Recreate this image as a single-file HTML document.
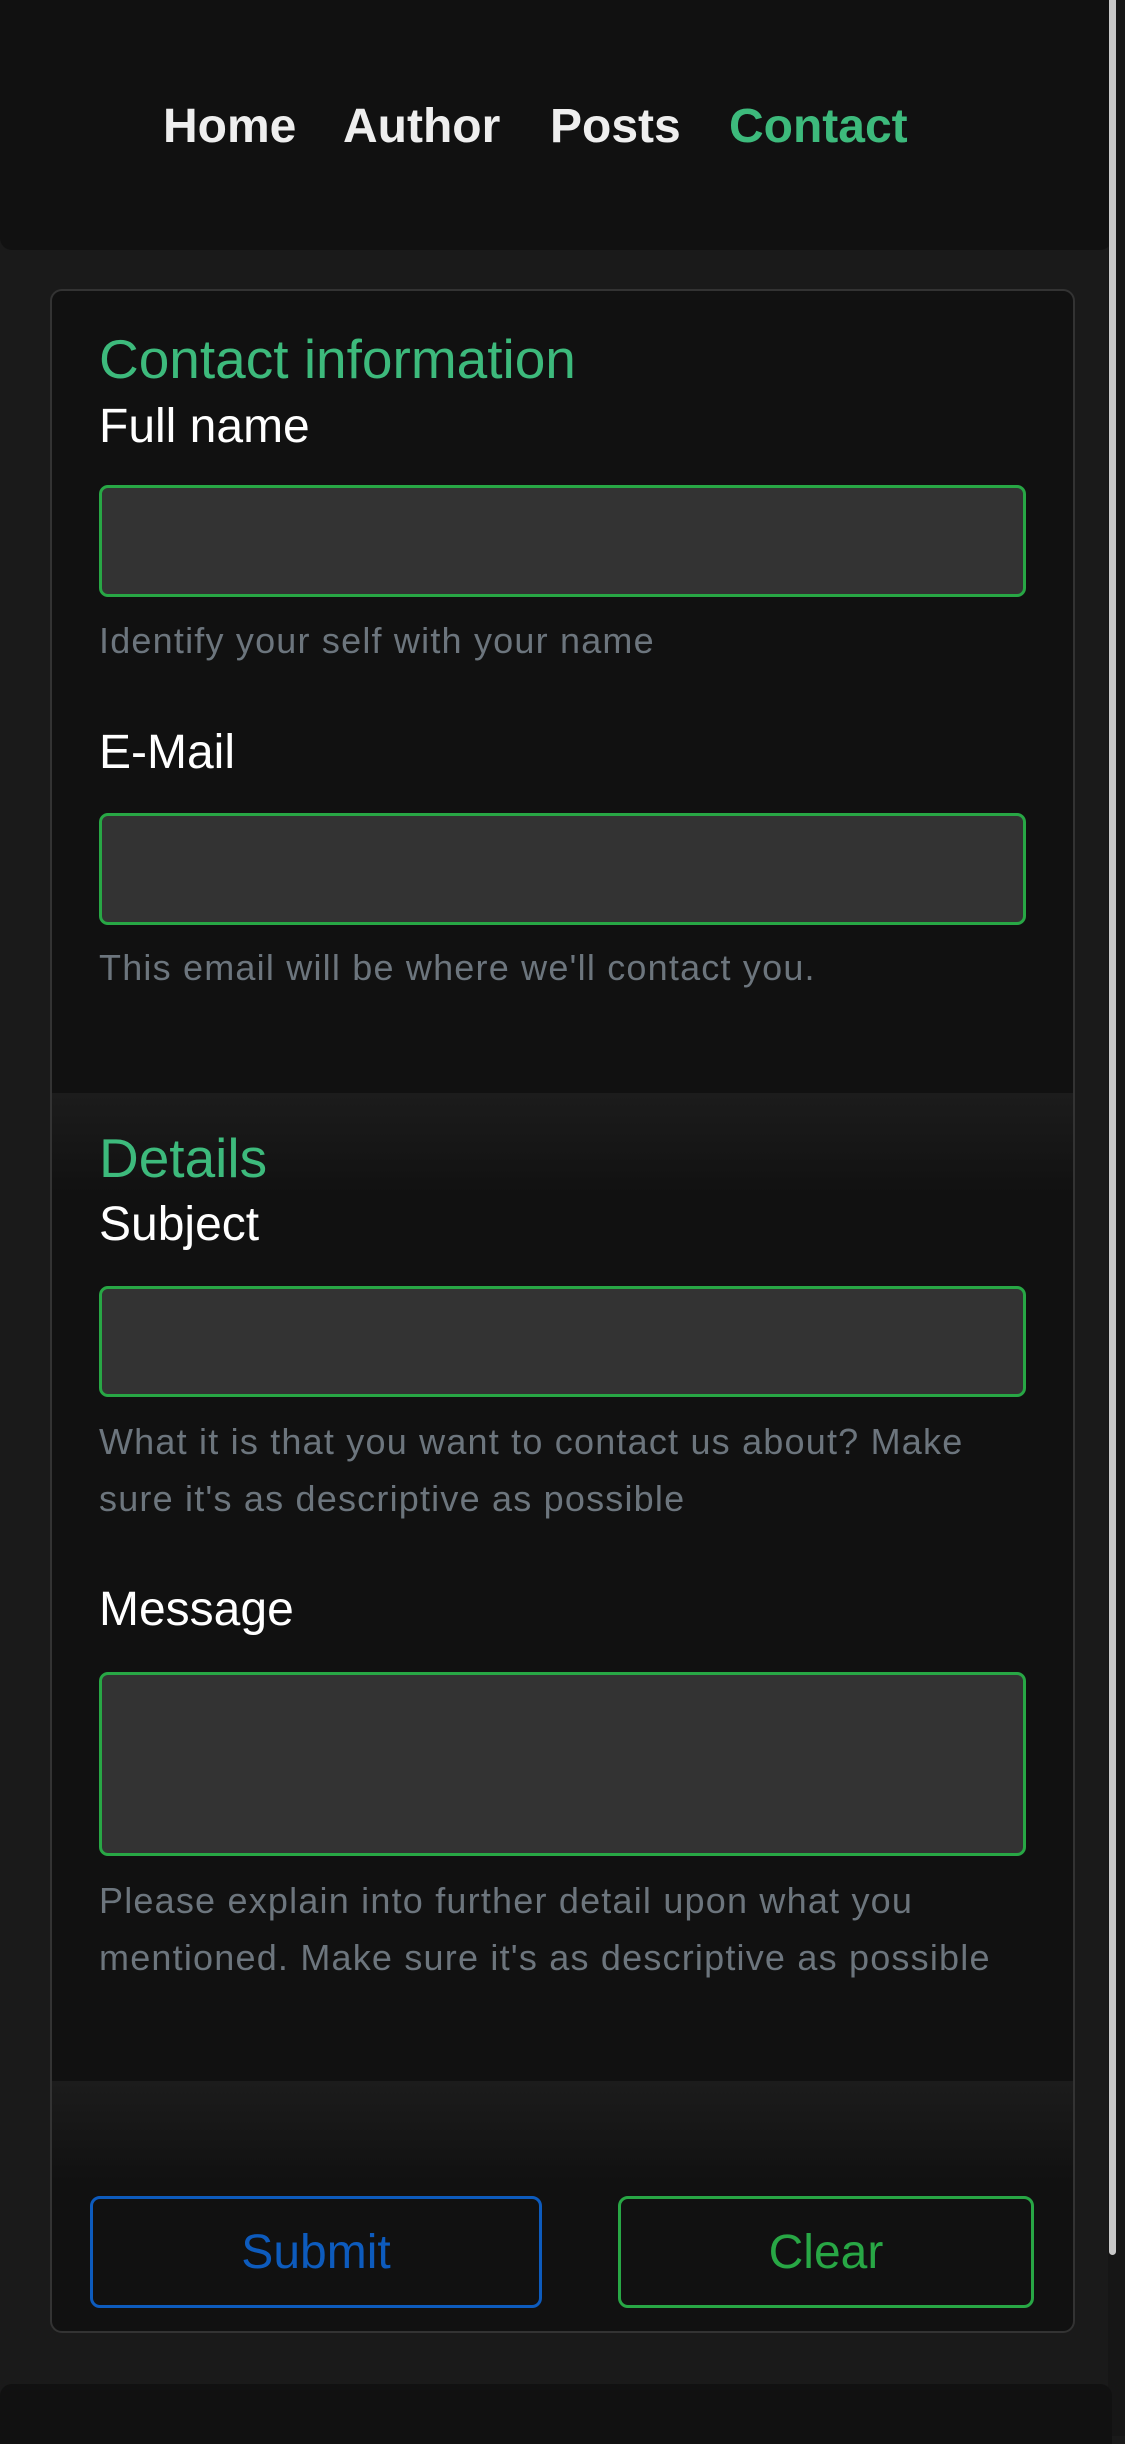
<!DOCTYPE html>
<html><head><meta charset="utf-8"><style>
*{margin:0;padding:0;box-sizing:border-box}
body{width:1125px;height:2436px;background:#1a1a1a;font-family:"Liberation Sans",Arial,sans-serif;position:relative;overflow:hidden}
.a{position:absolute;line-height:1;white-space:nowrap}
.hdr{position:absolute;left:0;top:0;width:1112px;height:250px;background:#111;border-radius:0 0 12px 12px}
.nav{font-size:48px;font-weight:bold;color:#eee;top:103px}
.card{position:absolute;left:50px;top:289px;width:1025px;height:2044px;border:2px solid #333;border-radius:12px;background:#111;overflow:hidden}
.band{position:absolute;left:0;width:100%;height:100px;background:linear-gradient(#1c1c1c,#111)}
.h{font-size:55px;color:#3dba7c}
.l{font-size:48px;color:#fff}
.help{font-size:36px;color:#6c757d;letter-spacing:1.2px}
.help2{position:absolute;font-size:36px;color:#6c757d;letter-spacing:1.2px;line-height:57px;width:950px}
.in{position:absolute;left:99px;width:927px;background:#333;border:3px solid #28a745;border-radius:9px}
.btn{position:absolute;height:112px;border:3px solid;border-radius:10px;font-size:48px;display:flex;align-items:center;justify-content:center;background:#111}
.foot{position:absolute;left:0;top:2384px;width:1112px;height:60px;background:#111;border-radius:12px 12px 0 0}
.sb{position:absolute;left:1109px;top:0;width:7px;height:2255px;background:#c8c8c8;border-radius:0 0 4px 4px}
.sbt{position:absolute;left:1108px;top:0;width:17px;height:2436px;background:#161616}
</style></head><body>
<div class="sbt"></div>
<div class="hdr"></div>
<div class="a nav" style="left:163px">Home</div>
<div class="a nav" style="left:343px">Author</div>
<div class="a nav" style="left:550px">Posts</div>
<div class="a nav" style="left:729px;color:#3dba7c">Contact</div>

<div class="card">
<div class="band" style="top:802px"></div>
<div class="band" style="top:1790px"></div>
</div>

<div class="a h" style="left:99px;top:332px">Contact information</div>
<div class="a l" style="left:99px;top:403px">Full name</div>
<div class="in" style="top:485px;height:112px"></div>
<div class="a help" style="left:99px;top:623px">Identify your self with your name</div>
<div class="a l" style="left:99px;top:729px">E-Mail</div>
<div class="in" style="top:813px;height:112px"></div>
<div class="a help" style="left:99px;top:950px">This email will be where we'll contact you.</div>

<div class="a h" style="left:99px;top:1131px">Details</div>
<div class="a l" style="left:99px;top:1201px">Subject</div>
<div class="in" style="top:1286px;height:111px"></div>
<div class="help2" style="left:99px;top:1413px">What it is that you want to contact us about? Make sure it's as descriptive as possible</div>
<div class="a l" style="left:99px;top:1586px">Message</div>
<div class="in" style="top:1672px;height:184px"></div>
<div class="help2" style="left:99px;top:1872px;width:960px">Please explain into further detail upon what you mentioned. Make sure it's as descriptive as possible</div>

<div class="btn" style="left:90px;top:2196px;width:452px;border-color:#0d5bbd;color:#0d5bbd">Submit</div>
<div class="btn" style="left:618px;top:2196px;width:416px;border-color:#28a745;color:#28a745">Clear</div>

<div class="foot"></div>
<div class="sb"></div>
</body></html>
